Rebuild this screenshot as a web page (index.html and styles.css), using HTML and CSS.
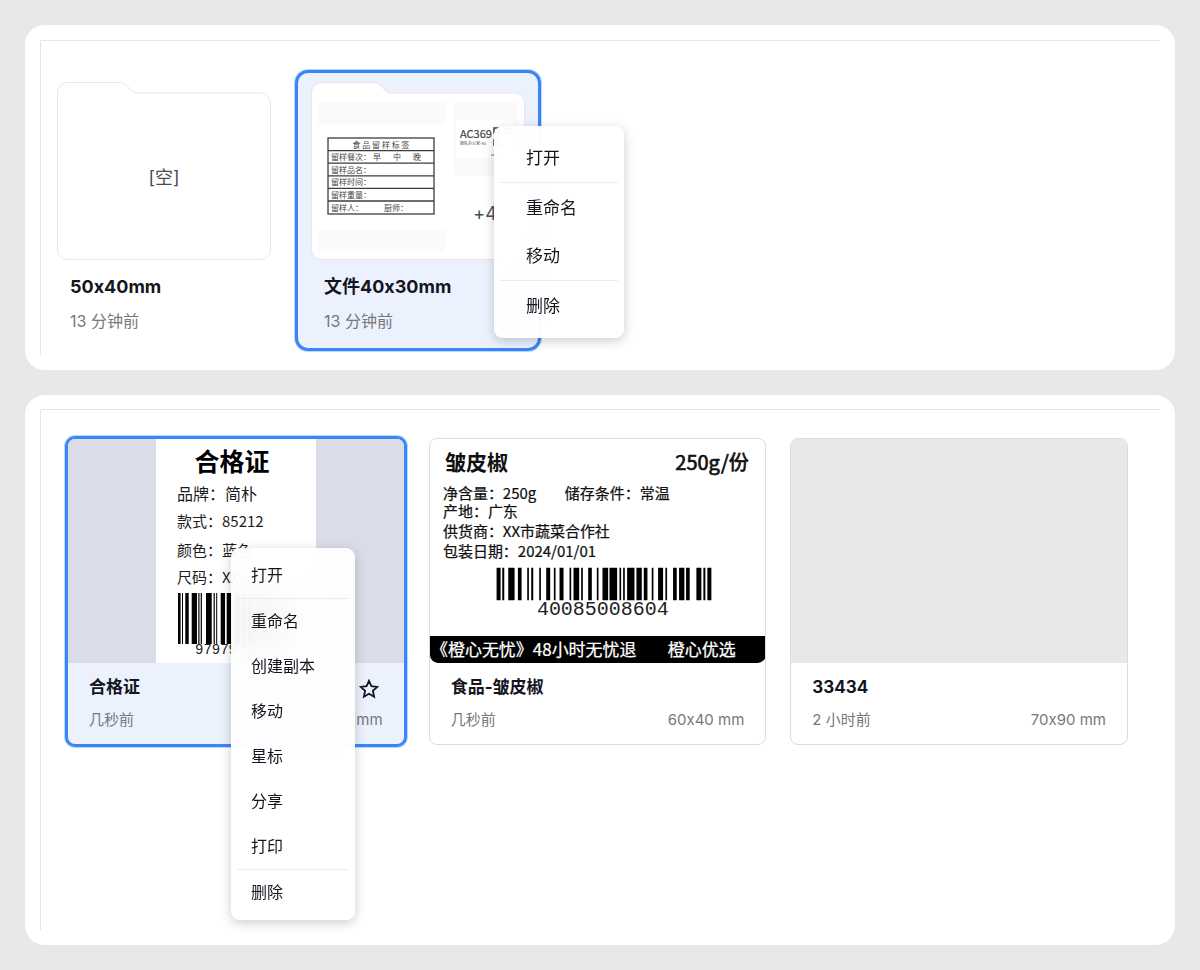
FILE: index.html
```html
<!DOCTYPE html>
<html lang="zh-CN">
<head>
<meta charset="utf-8">
<meta name="viewport" content="width=device-width, initial-scale=1">
<title>标签文件</title>
<link rel="stylesheet" href="styles.css">
</head>
<body>
<main class="page">
  <section class="panel">
    <div class="board folders">
      <article class="folder-card">
        <div class="folder">
          <svg class="folder-shape" viewBox="0 0 214 178" aria-hidden="true"><path d="M10.500 .5H61C67 .5 69 3 72 6C75 9 76 11 81 11H203.500A10 10 0 0 1 213.500 21V167.500A10 10 0 0 1 203.500 177.500H10.500A10 10 0 0 1 .5 167.500V10.500A10 10 0 0 1 10.500 .5Z"/></svg>
          <p class="folder-empty">[空]</p>
        </div>
        <h2 class="folder-title">50x40mm</h2>
        <p class="folder-time">13 分钟前</p>
      </article>

      <article class="folder-card selected">
        <div class="folder">
          <svg class="folder-shape" viewBox="0 0 214 178" aria-hidden="true"><path d="M10.500 .5H61C67 .5 69 3 72 6C75 9 76 11 81 11H203.500A10 10 0 0 1 213.500 21V167.500A10 10 0 0 1 203.500 177.500H10.500A10 10 0 0 1 .5 167.500V10.500A10 10 0 0 1 10.500 .5Z"/></svg>
          <div class="folder-grid">
            <div class="thumb thumb-large">
              <svg class="art" viewBox="0 0 128 106" role="img" aria-label="食品留样标签">
                <rect width="128" height="106" fill="#fff"/>
                <g fill="none" stroke="#3c3c3c" stroke-width="1.300">
                  <rect x="10" y="14" width="106" height="76"/>
                  <path d="M10 26.600H116M10 39.200H116M10 51.800H116M10 64.400H116M10 77H116"/>
                </g>
                <g fill="#444" font-size="8">
                  <text x="63" y="23.500" text-anchor="middle">食 品 留 样 标 签</text>
                  <text x="13" y="36">留样餐次：</text><text x="55" y="36">早</text><text x="75" y="36">中</text><text x="95" y="36">晚</text>
                  <text x="13" y="49">留样品名：</text>
                  <text x="13" y="61">留样时间：</text>
                  <text x="13" y="74">留样重量：</text>
                  <text x="13" y="87">留样人：</text><text x="66" y="87">厨师：</text>
                </g>
              </svg>
            </div>
            <div class="thumb thumb-small">
              <svg class="art" viewBox="0 0 64 38" role="img" aria-label="AC369">
                <rect x="3" width="58" height="38" fill="#fff"/>
                <text x="7" y="18" font-size="11" fill="#444" stroke="#444" stroke-width=".2">AC369</text>
                <text x="7" y="25" font-size="4" fill="#444">团队办公室-A3</text>
                <g fill="none" stroke="#444" stroke-width="1.500"><rect x="41" y="8" width="5" height="5"/><rect x="41" y="20" width="5" height="5"/><rect x="52" y="8" width="5" height="5"/></g>
                <path d="M38 35H46" stroke="#777"/>
              </svg>
            </div>
            <p class="more">+4</p>
          </div>
        </div>
        <h2 class="folder-title">文件40x30mm</h2>
        <p class="folder-time">13 分钟前</p>
        <div class="menu menu-folder" role="menu">
          <button class="item" role="menuitem" type="button">打开</button>
          <hr class="rule">
          <button class="item" role="menuitem" type="button">重命名</button>
          <button class="item" role="menuitem" type="button">移动</button>
          <hr class="rule">
          <button class="item" role="menuitem" type="button">删除</button>
        </div>
      </article>
    </div>
  </section>

  <section class="panel panel-grow">
    <div class="board files">
      <article class="file-card selected">
        <div class="preview preview-blue">
          <svg class="art tall" viewBox="0 0 160 224" role="img" aria-label="合格证">
            <rect width="160" height="224" fill="#fff"/>
            <text x="76" y="32" font-size="25" font-weight="700" text-anchor="middle" fill="#000">合格证</text>
            <g fill="#1c1c1c" font-size="15">
              <text x="21" y="61" font-size="16">品牌：简朴</text>
              <text x="21" y="88">款式：85212</text>
              <text x="21" y="117">颜色：蓝色</text>
              <text x="21" y="144">尺码：XXL</text>
            </g>
            <path fill="#000" d="M22 154h2.600v51h-2.600zM26 154h1v51h-1zM29.300 154h3.400v51h-3.400zM35.700 154h5.300v51h-5.300zM42.300 154h1.200v51h-1.200zM44.700 154h1.200v51h-1.200zM50 154h5.700v51h-5.700zM57.600 154h1.200v51h-1.200zM60.200 154h1v51h-1zM64.700 154h4.300v51h-4.300zM70.700 154h5v51h-5zM79 154h5v51h-5zM86 154h3v51h-3zM92 154h5v51h-5zM101 154h2v51h-2zM106 154h5v51h-5zM114 154h4v51h-4zM122 154h2v51h-2zM127 154h4v51h-4z"/>
            <text class="code" x="39" y="215" font-size="14">9797979797</text>
          </svg>
        </div>
        <div class="info">
          <div class="line"><h2 class="file-title">合格证</h2>
            <button class="star" type="button" aria-label="星标"><svg viewBox="0 0 20 20" aria-hidden="true"><path d="M10 1.800L12.400 7.200L18.300 7.900L13.900 11.800L15.100 17.700L10 14.700L4.900 17.700L6.100 11.800L1.700 7.900L7.600 7.200Z"/></svg></button></div>
          <div class="line meta"><span>几秒前</span><span>50x70 mm</span></div>
        </div>
        <div class="menu menu-file" role="menu">
          <button class="item" role="menuitem" type="button">打开</button>
          <hr class="rule">
          <button class="item" role="menuitem" type="button">重命名</button>
          <button class="item" role="menuitem" type="button">创建副本</button>
          <button class="item" role="menuitem" type="button">移动</button>
          <button class="item" role="menuitem" type="button">星标</button>
          <button class="item" role="menuitem" type="button">分享</button>
          <button class="item" role="menuitem" type="button">打印</button>
          <hr class="rule">
          <button class="item" role="menuitem" type="button">删除</button>
        </div>
      </article>

      <article class="file-card">
        <div class="preview">
          <svg class="art" viewBox="0 0 336 224" role="img" aria-label="皱皮椒 250g/份">
            <g fill="#111">
              <text x="15" y="31" font-size="21" font-weight="700">皱皮椒</text>
              <text x="319" y="31" font-size="20" text-anchor="end" stroke="#111" stroke-width=".7">250g/份</text>
            </g>
            <g fill="#111" stroke="#111" stroke-width=".25" font-size="15">
              <text x="13" y="60">净含量：250g</text><text x="135" y="60">储存条件：常温</text>
              <text x="13" y="78">产地：广东</text>
              <text x="13" y="98">供货商：XX市蔬菜合作社</text>
              <text x="13" y="118">包装日期：2024/01/01</text>
            </g>
            <g transform="translate(60 122) scale(.3333)" fill="#000">
              <path d="M20 20h12v98h-12zM37 20h6v98h-6zM55 20h19v98h-19zM84 20h11v98h-11zM112 20h5v98h-5zM124 20h6v98h-6zM148 20h5v98h-5zM169 20h12v98h-12zM192 20h5v98h-5zM209 20h12v98h-12zM239 20h5v98h-5zM251 20h17v98h-17zM274 20h5v98h-5zM295 20h11v98h-11zM321 20h5v98h-5zM338 20h17v98h-17zM359 20h23v98h-23zM389 20h5v98h-5zM400 20h5v98h-5zM412 20h22v98h-22zM440 20h16v98h-16zM462 20h11v98h-11zM486 20h5v98h-5zM505 20h15v98h-15zM527 20h5v98h-5zM550 20h11v98h-11zM568 20h16v98h-16zM589 20h11v98h-11zM620 20h15v98h-15zM641 20h6v98h-6zM653 20h12v98h-12z"/>
            </g>
            <text class="code" x="173" y="176" font-size="20" text-anchor="middle">40085008604</text>
            <path d="M0 197H336V216A8 8 0 0 1 328 224H8A8 8 0 0 1 0 216Z" fill="#000"/>
            <g fill="#fff" stroke="#fff" stroke-width=".25" font-size="17"><text x="1" y="217">《橙心无忧》48小时无忧退</text><text x="238" y="217">橙心优选</text></g>
          </svg>
        </div>
        <div class="info">
          <div class="line"><h2 class="file-title">食品-皱皮椒</h2></div>
          <div class="line meta"><span>几秒前</span><span>60x40 mm</span></div>
        </div>
      </article>

      <article class="file-card">
        <div class="preview preview-gray"></div>
        <div class="info">
          <div class="line"><h2 class="file-title">33434</h2></div>
          <div class="line meta"><span>2 小时前</span><span>70x90 mm</span></div>
        </div>
      </article>
    </div>
  </section>
</main>
</body>
</html>
```

FILE: styles.css
```css
* { box-sizing: border-box; }

body {
  margin: 0;
  background: #e8e8e8;
  color: #15151f;
  font-family: Inter, "Noto Sans CJK SC", sans-serif;
  font-feature-settings: "calt" 0;
}

h2, p, hr { margin: 0; }

button {
  border: 0;
  background: none;
  color: inherit;
  font: inherit;
  cursor: pointer;
}

.page {
  display: flex;
  flex-direction: column;
  gap: 25px;
  min-height: 100vh;
  padding: 25px;
}

.panel {
  display: flex;
  padding: 15px;
  border-radius: 20px;
  background: #fff;
}

.panel-grow { flex: 1; padding-top: 14px; }

.board {
  flex: 1;
  border: 1px solid #e5e5e5;
  border-width: 1px 0 0 1px;
  border-radius: 2px 0 0 0;
}

/* folders */

.folders {
  display: flex;
  gap: 8px;
  padding: 29px 0 4px;
}

.folder-card {
  position: relative;
  width: 246px;
  padding: 9px 13px 15px;
  border: 3px solid transparent;
  border-radius: 13px;
}

.folder-card.selected {
  border-color: #3a86f6;
  background: #ebf2fd;
  box-shadow: 0 0 0 1px #b9d6fb;
}

.folder {
  position: relative;
  display: flex;
  height: 178px;
}

.folder-shape {
  position: absolute;
  inset: 0;
  width: 100%;
  height: 100%;
  fill: #fff;
  stroke: #e6e6e8;
}

.folder-empty {
  position: relative;
  margin: auto;
  padding-top: 14px;
  color: #4b4b55;
  font-size: 18px;
  line-height: 24px;
}

.folder-grid {
  position: relative;
  flex: 1;
  display: grid;
  grid-template: 1fr 1fr / 2fr 1fr;
  gap: 1px 7px;
  padding: 20px 8px 9px 7px;
}

.thumb {
  display: flex;
  align-items: center;
  border-radius: 3px;
  background: #fafafa;
}

.thumb-large { grid-row: span 2; }

.art {
  display: block;
  width: 100%;
  font-family: "Noto Sans CJK SC", sans-serif;
}

.more {
  margin: auto;
  color: #4b4b55;
  font-size: 18px;
  line-height: 24px;
}

.folder-title {
  padding: 15px 13px 0;
  font-size: 18px;
  font-weight: 700;
  line-height: 24px;
}

.folder-time {
  padding: 10px 13px 0;
  color: #77777c;
  font-size: 16px;
  line-height: 24px;
}

/* files */

.files {
  display: grid;
  grid-template-columns: repeat(3, 1fr);
  align-items: start;
  gap: 24px;
  padding: 28px 32px 28px 26px;
}

.file-card {
  position: relative;
  border: 1px solid #dcdcde;
  border-radius: 8px;
}

.file-card.selected {
  border-color: #3a86f6;
  background: #ebf2fd;
  box-shadow: 0 0 0 2px #3a86f6, 0 0 0 3px #b9d6fb;
}

.preview {
  display: flex;
  justify-content: center;
  height: 224px;
  border-radius: 7px 7px 0 0;
}

.preview-blue { background: #dadde8; }
.preview-gray { background: #e8e8ea; }
.art.tall { width: auto; height: 100%; }

.code {
  fill: #222;
  font-family: "Liberation Mono", monospace;
}

.info {
  display: grid;
  gap: 9px;
  padding: 12px 21px;
}

.line {
  display: flex;
  align-items: flex-end;
  justify-content: space-between;
  height: 24px;
}

.file-title {
  font-size: 17px;
  font-weight: 700;
  line-height: 24px;
}

.meta {
  color: #77777c;
  font-size: 15px;
  line-height: 24px;
}

.star {
  display: flex;
  margin-right: 4px;
  padding: 0;
}

.star svg {
  width: 20px;
  height: 20px;
  fill: none;
  stroke: #15151f;
  stroke-width: 1.800;
}

/* context menus */

.menu {
  position: absolute;
  z-index: 1;
  display: flex;
  flex-direction: column;
  border-radius: 9px;
  background: rgba(255, 255, 255, .93);
  box-shadow: 0 3px 12px rgba(0, 0, 0, .2);
  backdrop-filter: blur(16px);
}

.menu-folder {
  top: 53px;
  left: 196px;
  width: 130px;
  padding: 8px 0;
  font-size: 17px;
}

.menu-file {
  top: 109px;
  left: 163px;
  width: 124px;
  padding: 5px 0;
  font-size: 16px;
}

.item { text-align: left; }
.menu-folder .item { height: 48px; padding: 0 32px 3px; }
.menu-file .item { height: 45px; padding: 0 20px 3px; }

.rule {
  height: 1px;
  margin: 0 6px;
  border: 0;
  background: #ececee;
}

.menu-folder .rule { margin-bottom: 1px; }
```
